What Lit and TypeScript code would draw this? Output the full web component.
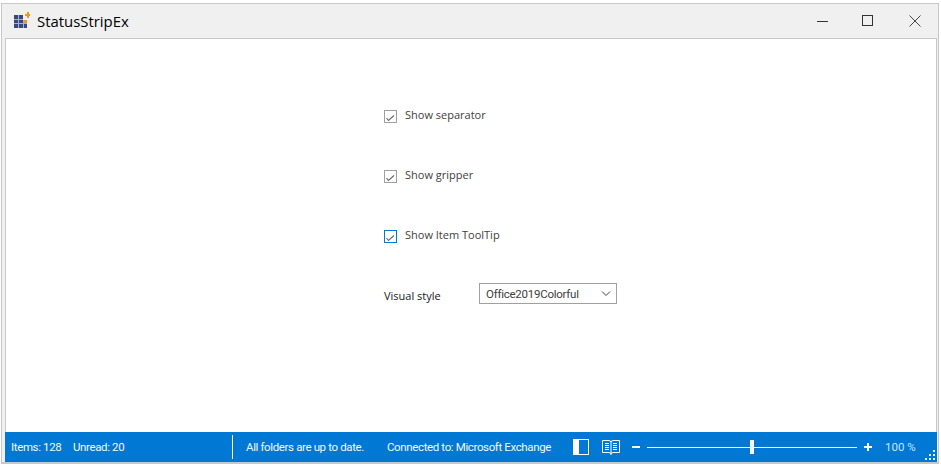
import { html, css, LitElement } from 'lit';
import { customElement } from 'lit/decorators.js';

@customElement('app-root')
export class AppRoot extends LitElement {
  static styles = css`
    :host {
      display: block;
      width: 941px;
      height: 465px;
      background: #fff;
      font-family: 'Open Sans', 'Liberation Sans', sans-serif;
      overflow: hidden;
    }

    .window {
      box-sizing: border-box;
      width: 938px;
      height: 461px;
      margin: 3px 0 0 1px;
      display: flex;
      flex-direction: column;
      border: 1px solid #c8c8c8;
      border-bottom-width: 2px;
      background: #f0f0f0;
    }

    .titlebar {
      height: 34px;
      display: flex;
      align-items: center;
      flex: none;
    }

    .app-icon {
      margin: 0 0 2px 12px;
      width: 16px;
      height: 16px;
      flex: none;
    }

    .title {
      margin-left: 7px;
      font-size: 14.9px;
      color: #000;
      flex: 1;
    }

    .caption {
      width: 46px;
      display: flex;
      justify-content: center;
    }

    .caption.max {
      margin-left: -1px;
      margin-right: 1px;
    }

    .body {
      flex: 1;
      margin: 0 1px 0 3px;
      display: flex;
      flex-direction: column;
      min-height: 0;
    }

    .content {
      flex: 1;
      box-sizing: border-box;
      background: #fff;
      border-top: 1px solid #c8c8c8;
      border-left: 1px solid #c8c8c8;
      border-right: 1px solid #c8c8c8;
      padding: 61px 0 0 378px;
      display: flex;
      flex-direction: column;
    }

    .check-row {
      height: 60px;
      display: flex;
      align-items: flex-start;
      gap: 8px;
    }

    .box {
      box-sizing: border-box;
      width: 13px;
      height: 13px;
      margin-top: 10px;
      border: 1px solid #a0a0a0;
      display: flex;
      flex: none;
    }

    .box.active {
      border-color: #0078d7;
    }

    .check-label {
      font-size: 11px;
      line-height: 15px;
      margin-top: 7px;
      color: #404040;
    }

    .style-row {
      display: flex;
      align-items: center;
      margin-top: 2px;
      height: 22px;
    }

    .style-label {
      width: 95px;
      font-size: 11px;
      color: #202020;
      padding-top: 4px;
    }

    .select {
      box-sizing: border-box;
      width: 138px;
      height: 21px;
      border: 1px solid #a0a0a0;
      display: flex;
      align-items: center;
      justify-content: space-between;
      padding: 1px 4px 0 6px;
      font-size: 11.5px;
      letter-spacing: -0.25px;
      color: #404040;
      font-family: Roboto, 'Liberation Sans', sans-serif;
    }

    .statusbar {
      height: 30px;
      flex: none;
      background: #0078d4;
      color: #f2f8fd;
      display: flex;
      align-items: center;
      font-size: 11.5px;
      letter-spacing: -0.37px;
      font-family: Roboto, 'Liberation Sans', sans-serif;
      position: relative;
    }

    .items {
      margin-left: 6px;
      width: 62px;
    }

    .unread {
      width: 159px;
    }

    .sep {
      width: 1px;
      height: 24px;
      background: #fff;
      flex: none;
    }

    .sync {
      margin-left: 13px;
      width: 141px;
    }

    .conn {
      width: 186px;
    }

    .view {
      flex: none;
      display: block;
    }

    .book {
      margin-left: 13px;
    }

    .zoom-out {
      margin-left: 12px;
      width: 8px;
      height: 2px;
      background: #fff;
      flex: none;
    }

    .slider {
      margin-left: 7px;
      width: 210px;
      display: flex;
      align-items: center;
      flex: none;
    }

    .track {
      height: 1px;
      background: #fff;
    }

    .track.left {
      width: 103px;
    }

    .track.right {
      flex: 1;
    }

    .thumb {
      width: 4px;
      height: 14px;
      background: #fff;
      flex: none;
    }

    .zoom-in {
      margin-left: 7px;
      flex: none;
      display: block;
    }

    .percent {
      margin-left: 13px;
      color: #cfe6f8;
      letter-spacing: 0;
    }

    .grip {
      position: absolute;
      right: 1px;
      bottom: 1px;
      display: block;
    }
  `;

  renderCheck(label: string, active = false) {
    return html`
      <div class="check-row">
        <span class="box ${active ? 'active' : ''}">
          <svg width="11" height="11" viewBox="0 0 11 11" fill="none">
            <path d="M1.5 7 L3.5 9.5 L9 4.5" stroke="#666" stroke-width="1.1" />
          </svg>
        </span>
        <span class="check-label">${label}</span>
      </div>
    `;
  }

  render() {
    return html`
      <div class="window">
        <div class="titlebar">
          <svg class="app-icon" viewBox="0 0 16 16">
            <rect x="0" y="3" width="9" height="4" fill="#39477f" />
            <rect x="0" y="8" width="13" height="8" fill="#39477f" />
            <path d="M4.5 3 V16 M9.5 8 V16 M0 7.5 H9 M0 11.5 H13" stroke="#aab0c8" stroke-width="1" />
            <rect x="10" y="8" width="3" height="3" fill="#f0952b" />
            <path d="M11 2 h2 v-2 h2 v2 h1 v2 h-1 v2 h-2 v-2 h-2 z" fill="#f0952b" />
          </svg>
          <span class="title">StatusStripEx</span>
          <span class="caption">
            <svg width="12" height="12" viewBox="0 0 12 12"><rect x="0" y="6" width="11" height="1" fill="#333" /></svg>
          </span>
          <span class="caption max">
            <svg width="12" height="12" viewBox="0 0 12 12"><rect x="0.5" y="0.5" width="10" height="10" fill="none" stroke="#333" /></svg>
          </span>
          <span class="caption">
            <svg width="12" height="12" viewBox="0 0 12 12"><path d="M0.5 0.5 L11.5 11.5 M11.5 0.5 L0.5 11.5" stroke="#333" stroke-width="0.9" /></svg>
          </span>
        </div>
        <div class="body">
          <div class="content">
            ${this.renderCheck('Show separator')}
            ${this.renderCheck('Show gripper')}
            ${this.renderCheck('Show Item ToolTip', true)}
            <div class="style-row">
              <span class="style-label">Visual style</span>
              <span class="select">
                Office2019Colorful
                <svg width="12" height="8" viewBox="0 0 12 8" fill="none">
                  <path d="M2 1.5 L6 5.5 L10 1.5" stroke="#404040" />
                </svg>
              </span>
            </div>
          </div>
          <div class="statusbar">
            <span class="items">Items: 128</span>
            <span class="unread">Unread: 20</span>
            <span class="sep"></span>
            <span class="sync">All folders are up to date.</span>
            <span class="conn">Connected to: Microsoft Exchange</span>
            <svg class="view" width="16" height="16" viewBox="0 0 16 16">
              <rect x="0.5" y="0.5" width="15" height="15" fill="none" stroke="#fff" />
              <rect x="0" y="0" width="6" height="16" fill="#fff" />
            </svg>
            <svg class="view book" width="18" height="16" viewBox="0 0 18 16" fill="none" stroke="#fff">
              <path d="M0.5 1.5 H7 L9 2.5 L11 1.5 H17.5 V13.5 H11 L9 14.5 L7 13.5 H0.5 Z" />
              <path d="M9 2 V16" />
              <path d="M3 4.5 H7 M3 6.5 H7 M3 8.5 H7 M3 10.5 H7 M11 4.5 H15 M11 6.5 H15 M11 8.5 H15 M11 10.5 H15" />
            </svg>
            <span class="zoom-out"></span>
            <div class="slider">
              <span class="track left"></span>
              <span class="thumb"></span>
              <span class="track right"></span>
            </div>
            <svg class="zoom-in" width="8" height="8" viewBox="0 0 8 8">
              <path d="M0 3 H3 V0 H5 V3 H8 V5 H5 V8 H3 V5 H0 Z" fill="#fff" />
            </svg>
            <span class="percent">100 %</span>
            <svg class="grip" width="11" height="11" viewBox="0 0 11 11" fill="#e6f1fa">
              <rect x="8" y="0" width="2" height="2" />
              <rect x="4" y="4" width="2" height="2" />
              <rect x="8" y="4" width="2" height="2" />
              <rect x="0" y="8" width="2" height="2" />
              <rect x="4" y="8" width="2" height="2" />
              <rect x="8" y="8" width="2" height="2" />
            </svg>
          </div>
        </div>
      </div>
    `;
  }
}
